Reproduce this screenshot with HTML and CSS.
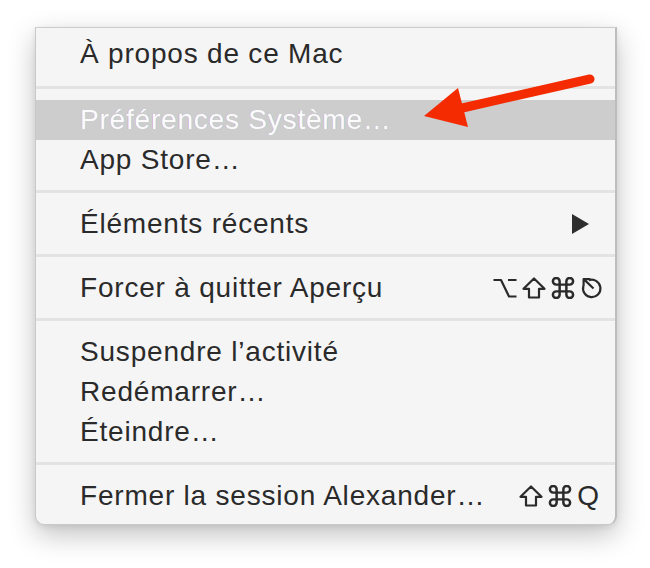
FILE: index.html
```html
<!DOCTYPE html>
<html lang="fr">
<head>
<meta charset="utf-8">
<title>Menu Apple</title>
<link rel="stylesheet" href="styles.css">
</head>
<body>
<div class="stage">
  <div class="menu">
    <div class="item first">À propos de ce Mac</div>
    <div class="sep sep-first"></div>
    <div class="item hl">Préférences Système…</div>
    <div class="item">App Store…</div>
    <div class="sep"></div>
    <div class="item"><span>Éléments récents</span><span class="tri"></span></div>
    <div class="sep"></div>
    <div class="item"><span>Forcer à quitter Aperçu</span>
      <span class="keys" aria-label="Option Maj Commande Échap">
        <svg class="key" viewBox="0 0 24 22"><path d="M0.5 3H8L16 19.5H23.5M15 3H23.5"/></svg>
        <svg class="key" viewBox="0 0 24 22"><path d="M12 1.5L22.5 11.8H17V20.5H7V11.8H1.5Z"/></svg>
        <svg class="key" viewBox="2.2 2.2 19.6 19.6"><path d="M15 6v12a3 3 0 1 0 3-3H6a3 3 0 1 0 3 3V6a3 3 0 1 0-3 3h12a3 3 0 1 0-3-3"/></svg>
        <svg class="key" viewBox="0 0 24 22"><path d="M9 3.2A8.7 8.7 0 1 1 3.4 9M13.5 11.5L4 2.4M3.6 9V2.2H10.4"/></svg>
      </span>
    </div>
    <div class="sep"></div>
    <div class="item">Suspendre l’activité</div>
    <div class="item">Redémarrer…</div>
    <div class="item">Éteindre…</div>
    <div class="sep"></div>
    <div class="item"><span>Fermer la session Alexander…</span>
      <span class="keys" aria-label="Maj Commande Q">
        <svg class="key" viewBox="0 0 24 22"><path d="M12 1.5L22.5 11.8H17V20.5H7V11.8H1.5Z"/></svg>
        <svg class="key" viewBox="2.2 2.2 19.6 19.6"><path d="M15 6v12a3 3 0 1 0 3-3H6a3 3 0 1 0 3 3V6a3 3 0 1 0-3 3h12a3 3 0 1 0-3-3"/></svg>
        <span class="q">Q</span>
      </span>
    </div>
  </div>
  <svg class="arrow" width="650" height="568" viewBox="0 0 650 568">
    <line x1="590" y1="79" x2="458" y2="109" stroke="#f42a00" stroke-width="9" stroke-linecap="round"/>
    <polygon points="424,116 458,88 468,127" fill="#f42a00"/>
  </svg>
</div>
</body>
</html>
```

FILE: styles.css
```css
html, body {
  margin: 0;
  padding: 0;
  background: #ffffff;
}
.stage {
  position: relative;
  width: 650px;
  height: 568px;
  padding: 27px 0 0 35px;
  box-sizing: border-box;
}
.menu {
  width: 582px;
  height: 498px;
  box-sizing: border-box;
  background: #f5f5f5;
  border: 1px solid #c9c9c9;
  border-right: 2px solid #bdbdbd;
  border-top-color: #cccccc;
  border-radius: 0 0 9px 9px;
  box-shadow: 0 10px 28px rgba(0, 0, 0, 0.24), 0 2px 6px rgba(0, 0, 0, 0.08);
  padding: 6px 0 8px 0;
  display: flex;
  flex-direction: column;
  font-family: "Liberation Sans", Arial, sans-serif;
  font-size: 28px;
  letter-spacing: 0.8px;
  color: #2a2a2a;
}
.item {
  height: 40px;
  line-height: 40px;
  padding: 0 11px 0 44px;
  display: flex;
  justify-content: space-between;
  align-items: center;
  white-space: nowrap;
}
.item.hl {
  background: #cdcdcd;
  color: #fbfbfb;
  text-shadow: -0.6px 0 rgba(255, 80, 160, 0.35), 0.6px 0 rgba(80, 220, 255, 0.35);
}
.sep {
  height: 3px;
  background: #e3e3e3;
  margin: 10px 0 11px 0;
}
.sep.sep-first {
  margin: 12px 0 11px 0;
}
.tri {
  width: 0;
  height: 0;
  border-top: 10px solid transparent;
  border-bottom: 10px solid transparent;
  border-left: 17px solid #2e2e2e;
  margin-right: 15px;
}
.keys {
  display: flex;
  align-items: center;
  gap: 5px;
  color: #2a2a2a;
}
.key {
  width: 24px;
  height: 22px;
  fill: none;
  stroke: #2a2a2a;
  stroke-width: 2.2;
  stroke-linejoin: round;
  stroke-linecap: butt;
}
.keys .q {
  font-size: 28px;
  letter-spacing: 0;
  margin-left: 0;
  margin-right: 5px;
}
.arrow {
  position: absolute;
  left: 0;
  top: 0;
}
```
